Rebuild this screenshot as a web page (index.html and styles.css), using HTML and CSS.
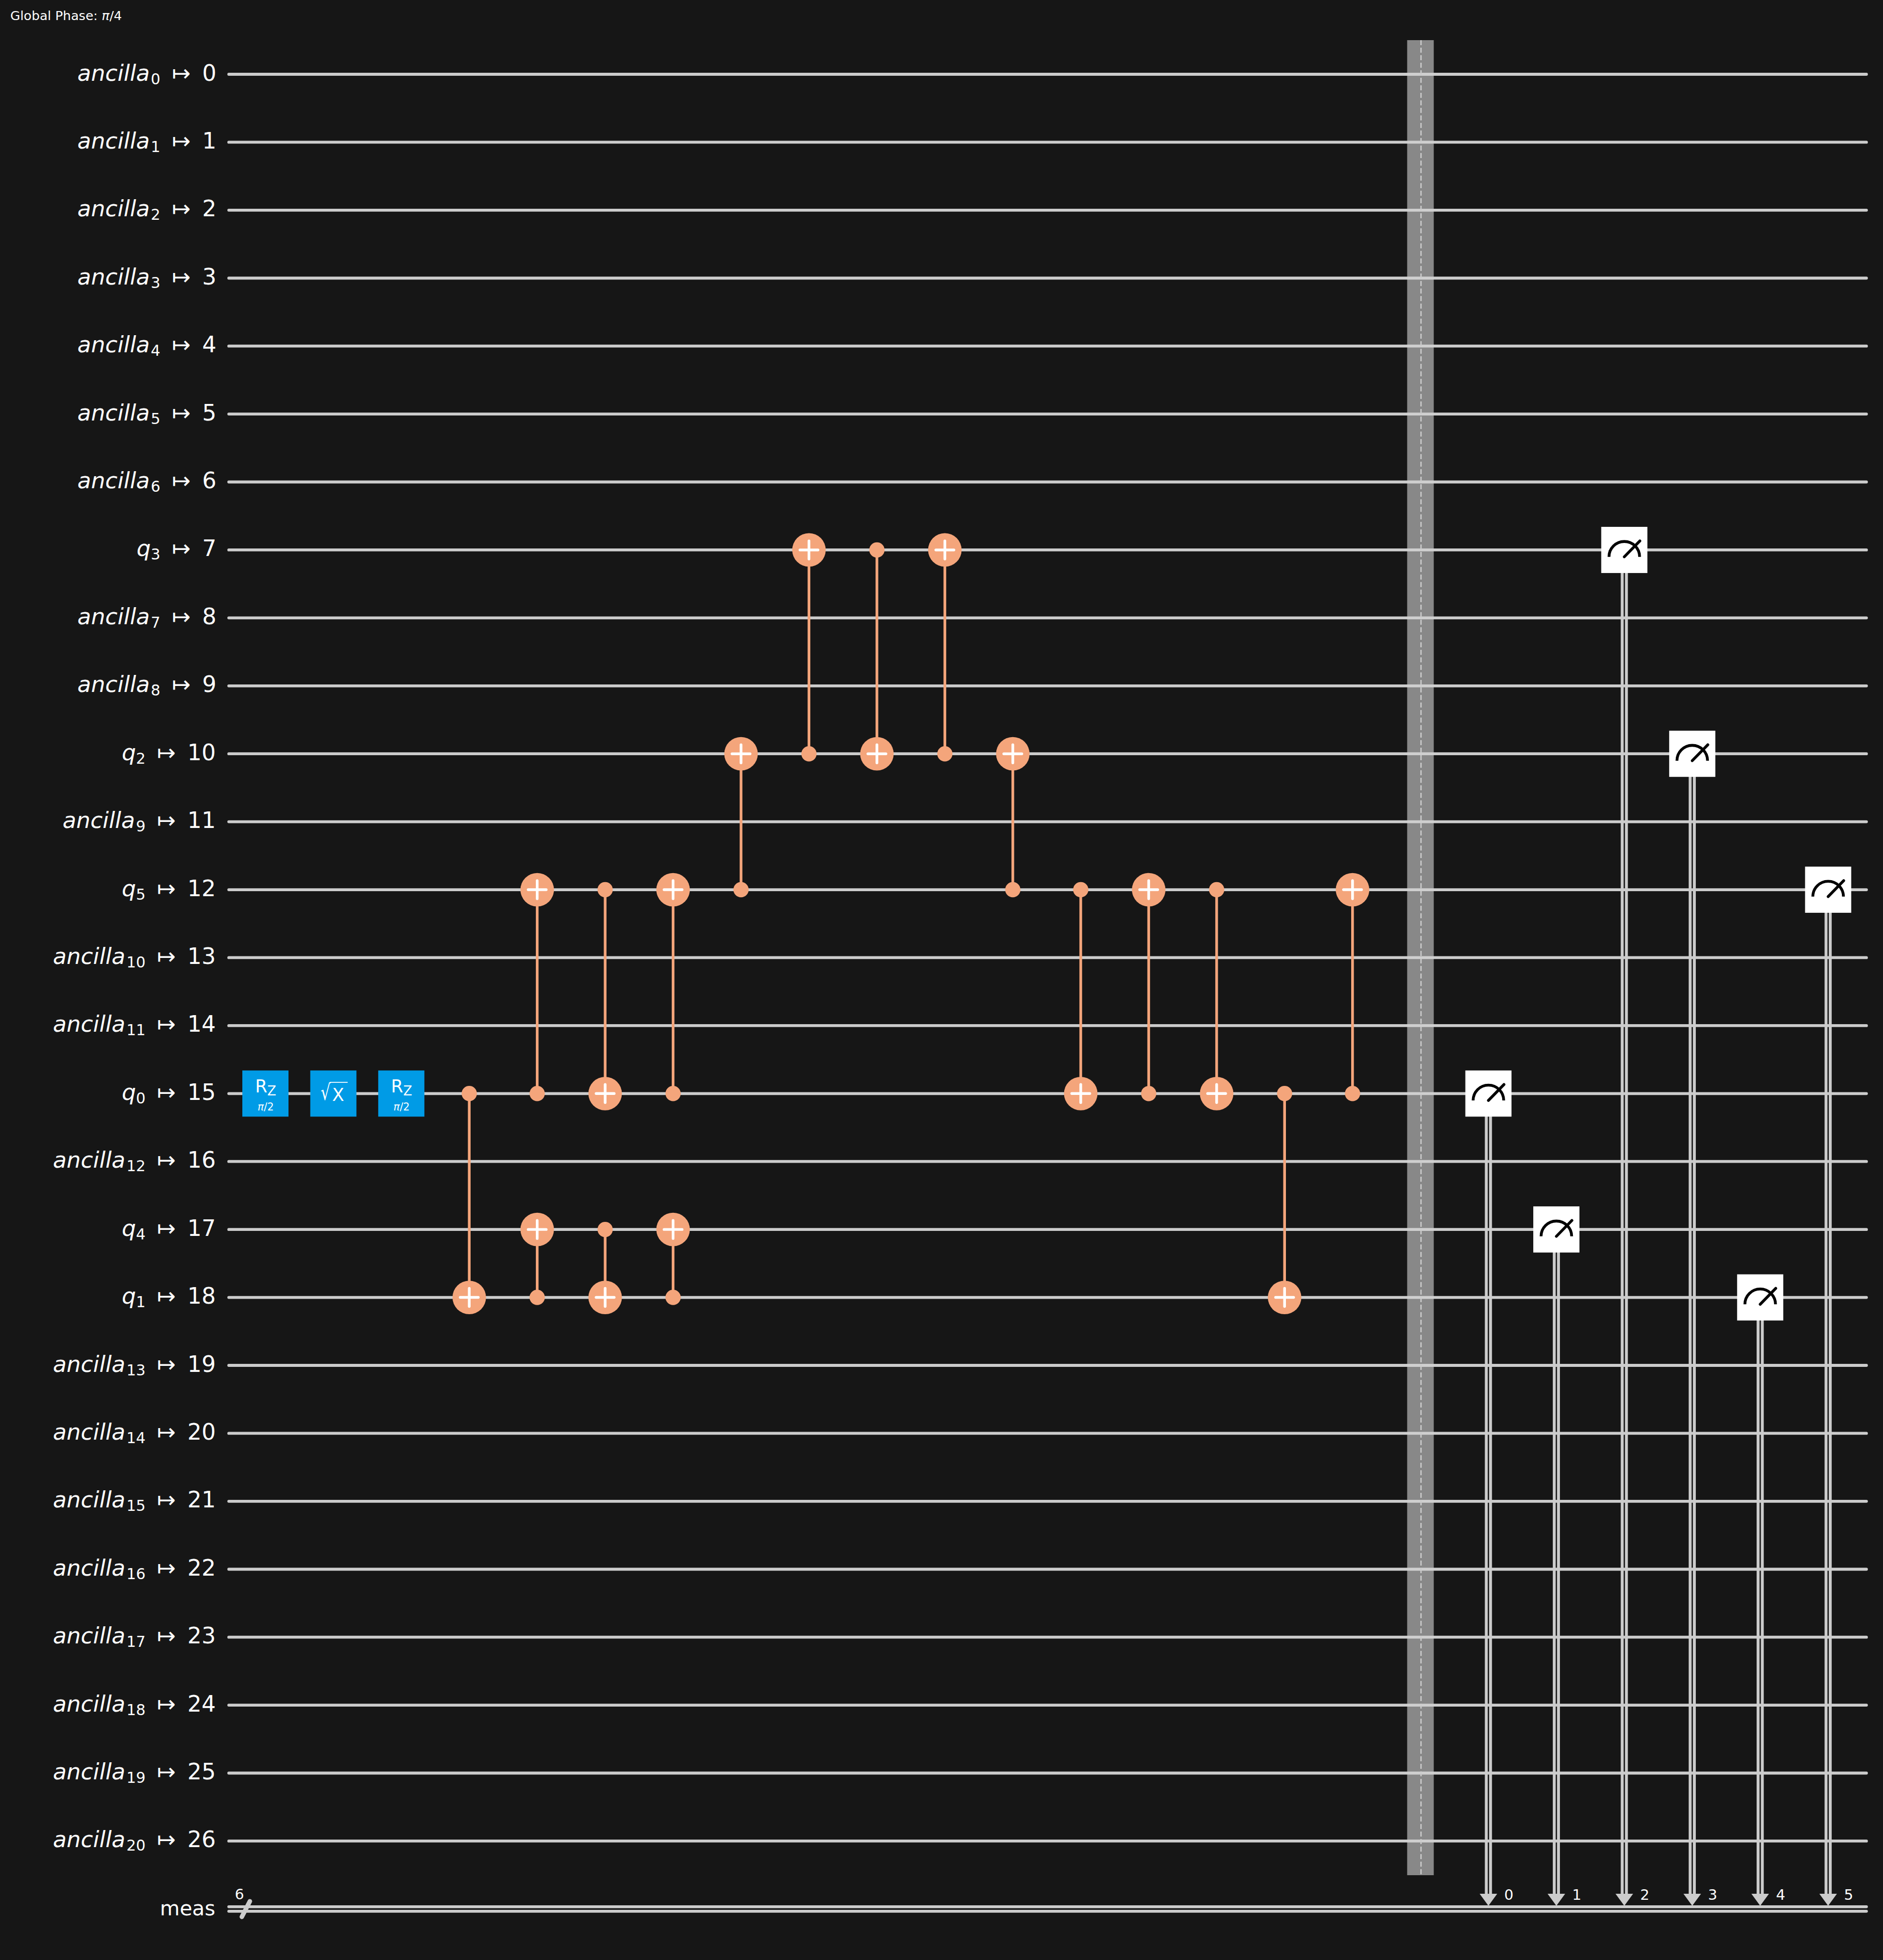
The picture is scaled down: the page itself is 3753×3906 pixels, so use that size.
FILE: index.html
```html
<!DOCTYPE html>
<html lang="en">
<head>
    <meta charset="UTF-8">
    <title>Quantum circuit</title>
    <link rel="stylesheet" href="styles.css">
</head>
<body>
<svg class="circuit" width="3753" height="3906" viewBox="0 0 3753 3906">
    <defs>
        <g id="ctrl"><circle r="15.2"/></g>
        <g id="targ"><circle r="33.4"/><path class="plus" d="M-18 0H18M0 -18V18"/></g>
        <g id="meter">
            <rect class="meter-box" x="-46" y="-46" width="92" height="92"/>
            <path class="meter-arc" d="M-30.5 13.7A30.5 30.5 0 0 1 30.5 13.7"/>
            <path class="meter-needle" d="M0 13.7L31 -18"/>
        </g>
    </defs>

    <text class="phase" x="20.5" y="40">Global Phase: <tspan class="it">π</tspan>/4</text>

    <!-- register labels -->
    <g class="labels">
        <text x="431.3" y="160.5"><tspan class="it">ancilla</tspan><tspan class="sub" dx="2" dy="7">0</tspan><tspan dx="23" dy="-7">↦</tspan><tspan dx="23">0</tspan></text>
        <text x="431.3" y="295.9"><tspan class="it">ancilla</tspan><tspan class="sub" dx="2" dy="7">1</tspan><tspan dx="23" dy="-7">↦</tspan><tspan dx="23">1</tspan></text>
        <text x="431.3" y="431.3"><tspan class="it">ancilla</tspan><tspan class="sub" dx="2" dy="7">2</tspan><tspan dx="23" dy="-7">↦</tspan><tspan dx="23">2</tspan></text>
        <text x="431.3" y="566.8"><tspan class="it">ancilla</tspan><tspan class="sub" dx="2" dy="7">3</tspan><tspan dx="23" dy="-7">↦</tspan><tspan dx="23">3</tspan></text>
        <text x="431.3" y="702.2"><tspan class="it">ancilla</tspan><tspan class="sub" dx="2" dy="7">4</tspan><tspan dx="23" dy="-7">↦</tspan><tspan dx="23">4</tspan></text>
        <text x="431.3" y="837.6"><tspan class="it">ancilla</tspan><tspan class="sub" dx="2" dy="7">5</tspan><tspan dx="23" dy="-7">↦</tspan><tspan dx="23">5</tspan></text>
        <text x="431.3" y="973"><tspan class="it">ancilla</tspan><tspan class="sub" dx="2" dy="7">6</tspan><tspan dx="23" dy="-7">↦</tspan><tspan dx="23">6</tspan></text>
        <text x="431.3" y="1108.4"><tspan class="it">q</tspan><tspan class="sub" dy="7">3</tspan><tspan dx="23" dy="-7">↦</tspan><tspan dx="23">7</tspan></text>
        <text x="431.3" y="1243.9"><tspan class="it">ancilla</tspan><tspan class="sub" dx="2" dy="7">7</tspan><tspan dx="23" dy="-7">↦</tspan><tspan dx="23">8</tspan></text>
        <text x="431.3" y="1379.3"><tspan class="it">ancilla</tspan><tspan class="sub" dx="2" dy="7">8</tspan><tspan dx="23" dy="-7">↦</tspan><tspan dx="23">9</tspan></text>
        <text x="430" y="1514.7"><tspan class="it">q</tspan><tspan class="sub" dy="7">2</tspan><tspan dx="23" dy="-7">↦</tspan><tspan dx="23">10</tspan></text>
        <text x="430" y="1650.1"><tspan class="it">ancilla</tspan><tspan class="sub" dx="2" dy="7">9</tspan><tspan dx="23" dy="-7">↦</tspan><tspan dx="23">11</tspan></text>
        <text x="430" y="1785.5"><tspan class="it">q</tspan><tspan class="sub" dy="7">5</tspan><tspan dx="23" dy="-7">↦</tspan><tspan dx="23">12</tspan></text>
        <text x="430" y="1921"><tspan class="it">ancilla</tspan><tspan class="sub" dx="2" dy="7">10</tspan><tspan dx="23" dy="-7">↦</tspan><tspan dx="23">13</tspan></text>
        <text x="430" y="2056.4"><tspan class="it">ancilla</tspan><tspan class="sub" dx="2" dy="7">11</tspan><tspan dx="23" dy="-7">↦</tspan><tspan dx="23">14</tspan></text>
        <text x="430" y="2191.8"><tspan class="it">q</tspan><tspan class="sub" dy="7">0</tspan><tspan dx="23" dy="-7">↦</tspan><tspan dx="23">15</tspan></text>
        <text x="430" y="2327.2"><tspan class="it">ancilla</tspan><tspan class="sub" dx="2" dy="7">12</tspan><tspan dx="23" dy="-7">↦</tspan><tspan dx="23">16</tspan></text>
        <text x="430" y="2462.6"><tspan class="it">q</tspan><tspan class="sub" dy="7">4</tspan><tspan dx="23" dy="-7">↦</tspan><tspan dx="23">17</tspan></text>
        <text x="430" y="2598.1"><tspan class="it">q</tspan><tspan class="sub" dy="7">1</tspan><tspan dx="23" dy="-7">↦</tspan><tspan dx="23">18</tspan></text>
        <text x="430" y="2733.5"><tspan class="it">ancilla</tspan><tspan class="sub" dx="2" dy="7">13</tspan><tspan dx="23" dy="-7">↦</tspan><tspan dx="23">19</tspan></text>
        <text x="430" y="2868.9"><tspan class="it">ancilla</tspan><tspan class="sub" dx="2" dy="7">14</tspan><tspan dx="23" dy="-7">↦</tspan><tspan dx="23">20</tspan></text>
        <text x="430" y="3004.3"><tspan class="it">ancilla</tspan><tspan class="sub" dx="2" dy="7">15</tspan><tspan dx="23" dy="-7">↦</tspan><tspan dx="23">21</tspan></text>
        <text x="430" y="3139.7"><tspan class="it">ancilla</tspan><tspan class="sub" dx="2" dy="7">16</tspan><tspan dx="23" dy="-7">↦</tspan><tspan dx="23">22</tspan></text>
        <text x="430" y="3275.2"><tspan class="it">ancilla</tspan><tspan class="sub" dx="2" dy="7">17</tspan><tspan dx="23" dy="-7">↦</tspan><tspan dx="23">23</tspan></text>
        <text x="430" y="3410.6"><tspan class="it">ancilla</tspan><tspan class="sub" dx="2" dy="7">18</tspan><tspan dx="23" dy="-7">↦</tspan><tspan dx="23">24</tspan></text>
        <text x="430" y="3546"><tspan class="it">ancilla</tspan><tspan class="sub" dx="2" dy="7">19</tspan><tspan dx="23" dy="-7">↦</tspan><tspan dx="23">25</tspan></text>
        <text x="430" y="3681.4"><tspan class="it">ancilla</tspan><tspan class="sub" dx="2" dy="7">20</tspan><tspan dx="23" dy="-7">↦</tspan><tspan dx="23">26</tspan></text>
        <text class="meas" x="429" y="3816.8">meas</text>
    </g>

    <!-- wires, 135.42 apart -->
    <path class="wire" d="M456 148H3720M456 283.42H3720M456 418.84H3720M456 554.26H3720M456 689.68H3720M456 825.1H3720M456 960.52H3720M456 1095.94H3720M456 1231.36H3720M456 1366.78H3720M456 1502.2H3720M456 1637.62H3720M456 1773.04H3720M456 1908.46H3720M456 2043.88H3720M456 2179.3H3720M456 2314.72H3720M456 2450.14H3720M456 2585.56H3720M456 2720.98H3720M456 2856.4H3720M456 2991.82H3720M456 3127.24H3720M456 3262.66H3720M456 3398.08H3720M456 3533.5H3720M456 3668.92H3720"/>
    <path class="wire" d="M456 3799.84H3720M456 3808.84H3720"/>
    <path class="wire slash" d="M482 3820L498 3789"/>
    <text class="small" x="468" y="3785">6</text>

    <!-- single qubit gates on q0 -->
    <g transform="translate(529 2179.3)">
        <rect class="gate" x="-46" y="-46" width="92" height="92"/>
        <text class="gate-name" x="-20.5" y="-2">R<tspan class="gate-sub" dy="5.7">Z</tspan></text>
        <text class="gate-param" x="0.6" y="34"><tspan class="it">π</tspan>/2</text>
    </g>
    <g transform="translate(664.42 2179.3)">
        <rect class="gate" x="-46" y="-46" width="92" height="92"/>
        <text class="radical" transform="translate(-25.5 12.2) scale(0.72 1)">√</text>
        <text class="gate-name" x="-2.5" y="14.6">X</text>
        <path class="vinculum" d="M-7 -22.5H28.5"/>
    </g>
    <g transform="translate(799.84 2179.3)">
        <rect class="gate" x="-46" y="-46" width="92" height="92"/>
        <text class="gate-name" x="-20.5" y="-2">R<tspan class="gate-sub" dy="5.7">Z</tspan></text>
        <text class="gate-param" x="0.6" y="34"><tspan class="it">π</tspan>/2</text>
    </g>

    <!-- cx gates -->
    <g class="cx">
        <path d="M935.26 2179.3V2585.56"/><use href="#ctrl" x="935.26" y="2179.3"/><use href="#targ" x="935.26" y="2585.56"/>
        <path d="M1070.68 1773.04V2179.3"/><use href="#targ" x="1070.68" y="1773.04"/><use href="#ctrl" x="1070.68" y="2179.3"/>
        <path d="M1070.68 2450.14V2585.56"/><use href="#targ" x="1070.68" y="2450.14"/><use href="#ctrl" x="1070.68" y="2585.56"/>
        <path d="M1206.1 1773.04V2179.3"/><use href="#ctrl" x="1206.1" y="1773.04"/><use href="#targ" x="1206.1" y="2179.3"/>
        <path d="M1206.1 2450.14V2585.56"/><use href="#ctrl" x="1206.1" y="2450.14"/><use href="#targ" x="1206.1" y="2585.56"/>
        <path d="M1341.52 1773.04V2179.3"/><use href="#targ" x="1341.52" y="1773.04"/><use href="#ctrl" x="1341.52" y="2179.3"/>
        <path d="M1341.52 2450.14V2585.56"/><use href="#targ" x="1341.52" y="2450.14"/><use href="#ctrl" x="1341.52" y="2585.56"/>
        <path d="M1476.94 1502.2V1773.04"/><use href="#targ" x="1476.94" y="1502.2"/><use href="#ctrl" x="1476.94" y="1773.04"/>
        <path d="M1612.36 1095.94V1502.2"/><use href="#targ" x="1612.36" y="1095.94"/><use href="#ctrl" x="1612.36" y="1502.2"/>
        <path d="M1747.78 1095.94V1502.2"/><use href="#ctrl" x="1747.78" y="1095.94"/><use href="#targ" x="1747.78" y="1502.2"/>
        <path d="M1883.2 1095.94V1502.2"/><use href="#targ" x="1883.2" y="1095.94"/><use href="#ctrl" x="1883.2" y="1502.2"/>
        <path d="M2018.62 1502.2V1773.04"/><use href="#targ" x="2018.62" y="1502.2"/><use href="#ctrl" x="2018.62" y="1773.04"/>
        <path d="M2154.04 1773.04V2179.3"/><use href="#ctrl" x="2154.04" y="1773.04"/><use href="#targ" x="2154.04" y="2179.3"/>
        <path d="M2289.46 1773.04V2179.3"/><use href="#targ" x="2289.46" y="1773.04"/><use href="#ctrl" x="2289.46" y="2179.3"/>
        <path d="M2424.88 1773.04V2179.3"/><use href="#ctrl" x="2424.88" y="1773.04"/><use href="#targ" x="2424.88" y="2179.3"/>
        <path d="M2560.3 2179.3V2585.56"/><use href="#ctrl" x="2560.3" y="2179.3"/><use href="#targ" x="2560.3" y="2585.56"/>
        <path d="M2695.72 1773.04V2179.3"/><use href="#targ" x="2695.72" y="1773.04"/><use href="#ctrl" x="2695.72" y="2179.3"/>
    </g>

    <!-- barrier -->
    <rect class="barrier" x="2804.6" y="80" width="53" height="3657"/>
    <path class="barrier-dash" d="M2832.2 80V3738"/>

    <!-- measures: double wire down to the classical register -->
    <g transform="translate(2966.56 0)">
        <path class="wire" d="M-4.2 2179.3V3776M4.2 2179.3V3776"/><path class="arrow" d="M-17.5 3774H17.5L0 3798Z"/>
        <use href="#meter" y="2179.3"/><text class="small" x="31.5" y="3786">0</text>
    </g>
    <g transform="translate(3101.98 0)">
        <path class="wire" d="M-4.2 2450.14V3776M4.2 2450.14V3776"/><path class="arrow" d="M-17.5 3774H17.5L0 3798Z"/>
        <use href="#meter" y="2450.14"/><text class="small" x="31.5" y="3786">1</text>
    </g>
    <g transform="translate(3237.4 0)">
        <path class="wire" d="M-4.2 1095.94V3776M4.2 1095.94V3776"/><path class="arrow" d="M-17.5 3774H17.5L0 3798Z"/>
        <use href="#meter" y="1095.94"/><text class="small" x="31.5" y="3786">2</text>
    </g>
    <g transform="translate(3372.82 0)">
        <path class="wire" d="M-4.2 1502.2V3776M4.2 1502.2V3776"/><path class="arrow" d="M-17.5 3774H17.5L0 3798Z"/>
        <use href="#meter" y="1502.2"/><text class="small" x="31.5" y="3786">3</text>
    </g>
    <g transform="translate(3508.24 0)">
        <path class="wire" d="M-4.2 2585.56V3776M4.2 2585.56V3776"/><path class="arrow" d="M-17.5 3774H17.5L0 3798Z"/>
        <use href="#meter" y="2585.56"/><text class="small" x="31.5" y="3786">4</text>
    </g>
    <g transform="translate(3643.66 0)">
        <path class="wire" d="M-4.2 1773.04V3776M4.2 1773.04V3776"/><path class="arrow" d="M-17.5 3774H17.5L0 3798Z"/>
        <use href="#meter" y="1773.04"/><text class="small" x="31.5" y="3786">5</text>
    </g>
</svg>
</body>
</html>
```

FILE: styles.css
```css
body {
    margin: 0;
    background-color: #161616;
}

.circuit {
    display: block;
    font-family: "DejaVu Sans", sans-serif;
    fill: #fff;
}

.phase {
    font-size: 25.5px;
}

.it {
    font-style: italic;
}

.labels text {
    font-size: 44.5px;
    text-anchor: end;
}

.labels .sub {
    font-size: 30px;
}

.labels .meas {
    font-size: 40.5px;
}

.wire {
    fill: none;
    stroke: #ccc;
    stroke-width: 5.8;
    stroke-linecap: round;
}

.slash {
    stroke-width: 9;
}

.small {
    font-size: 29px;
}

.gate {
    fill: #009be6;
}

.gate-name {
    font-size: 35px;
}

.gate-sub {
    font-size: 26px;
}

.gate-param {
    font-size: 20.5px;
    text-anchor: middle;
}

.radical {
    font-size: 43px;
}

.vinculum {
    fill: none;
    stroke: #fff;
    stroke-width: 1.8;
}

.cx {
    fill: #f4a57b;
}

.cx path {
    fill: none;
    stroke: #f4a57b;
    stroke-width: 5.4;
}

.plus {
    fill: none;
    stroke: #fff;
    stroke-width: 5.4;
    stroke-linecap: round;
}

.barrier {
    fill: #d1d1d1;
    opacity: 0.61;
}

.barrier-dash {
    fill: none;
    stroke: #ccc;
    stroke-width: 2.6;
    stroke-dasharray: 10 5;
}

.arrow {
    fill: #ccc;
}

.meter-box {
    fill: #fff;
}

.meter-arc {
    fill: none;
    stroke: #000;
    stroke-width: 5.6;
}

.meter-needle {
    fill: none;
    stroke: #000;
    stroke-width: 5.6;
    stroke-linecap: round;
}
```
